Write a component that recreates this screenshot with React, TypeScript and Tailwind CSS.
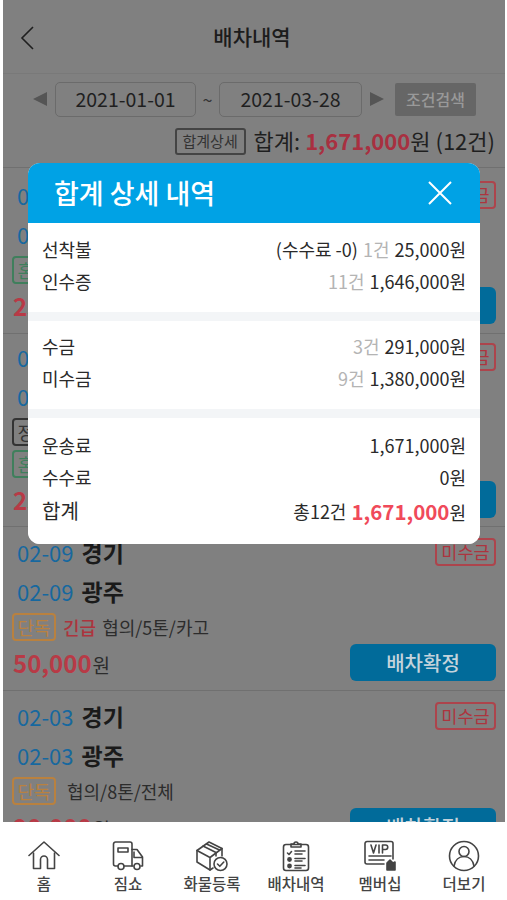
import React from 'react';

type Order = {
  date: string;
  from: string;
  to: string;
  tags: { label: string; tone: string }[];
  urgent?: boolean;
  info: string;
  price: string;
  pad: string;
};

const orders: Order[] = [
  { date: '02-26', from: '경기', to: '부산', tags: [{ label: '혼적', tone: 'border-[#3f7f5c] text-[#3f7f5c]' }], info: '협의/5톤/카고', price: '250,000', pad: 'pt-[8px] pb-[9px]' },
  { date: '02-17', from: '경기', to: '대구', tags: [{ label: '정기', tone: 'border-[#333333] text-[#333333]' }, { label: '혼적', tone: 'border-[#3f7f5c] text-[#3f7f5c]' }], info: '협의/5톤/윙바디', price: '230,000', pad: 'pt-[4px] pb-[8px]' },
  { date: '02-09', from: '경기', to: '광주', tags: [{ label: '단독', tone: 'border-[#b9813f] text-[#b9813f]' }], urgent: true, info: '협의/5톤/카고', price: '50,000', pad: 'pt-[6px] pb-[9px]' },
  { date: '02-03', from: '경기', to: '광주', tags: [{ label: '단독', tone: 'border-[#b9813f] text-[#b9813f]' }], info: '협의/8톤/전체', price: '90,000', pad: 'pt-[6px] pb-[9px]' },
];

function OrderRow({ order }: { order: Order }) {
  return (
    <div className={`shrink-0 border-b border-[#707070] pl-[9px] pr-[9px] ${order.pad}`}>
      <div className="flex h-[39px] justify-between">
        <div className="flex items-center gap-[8px] pl-[5px]">
          <span className="text-[22px] text-[#16689f]">{order.date}</span>
          <span className="text-[23px] font-bold text-[#1a1a1a]">{order.from}</span>
        </div>
        <span className="mt-[5px] flex h-[28px] w-[61px] items-center justify-center rounded-[4px] border-2 border-[#ad444c] text-[17.5px] text-[#ad343e]">미수금</span>
      </div>
      <div className="flex h-[39px] items-center gap-[8px] pl-[5px]">
        <span className="text-[22px] text-[#16689f]">{order.date}</span>
        <span className="text-[23px] font-bold text-[#1a1a1a]">{order.to}</span>
      </div>
      {order.tags.map((tag, i) => (
        <div key={tag.label} className={`flex h-[28px] items-center text-[18px] text-[#2c2c2c] ${i > 0 ? 'mt-[4px]' : 'mt-[2px]'}`}>
          <span className={`flex h-[28px] w-[44px] items-center justify-center rounded-[4px] border-2 ${tag.tone}`}>{tag.label}</span>
          {i === 0 && order.urgent && <span className="ml-[7px] font-medium text-[#ad343e]">긴급</span>}
          {i === 0 && <span className={order.urgent ? 'ml-[6px]' : 'ml-[11px]'}>{order.info}</span>}
        </div>
      ))}
      <div className="mt-[3px] flex h-[37px] items-center justify-between">
        <div className="flex items-baseline pl-[1px]">
          <span className="text-[24px] font-bold text-[#b83a46]">{order.price}</span>
          <span className="ml-[1px] text-[19px] text-[#2c2c2c]">원</span>
        </div>
        <button className="flex h-[37px] w-[146px] items-center justify-center rounded-[6px] bg-[#016b9a] text-[20px] font-medium text-[#c4d3dc]">배차확정</button>
      </div>
    </div>
  );
}

function DetailRow({ label, children, big }: { label: string; children: React.ReactNode; big?: boolean }) {
  return (
    <div className={`flex items-center justify-between text-[18px] text-[#2a2a2a] ${big ? 'h-[36px]' : 'h-[32px]'}`}>
      <span className={big ? 'text-[20px]' : ''}>{label}</span>
      <span className="flex items-center gap-[5px]">{children}</span>
    </div>
  );
}

const Count = ({ children }: { children: React.ReactNode }) => <span className="text-[#b4b4b4]">{children}</span>;

function SummaryModal() {
  return (
    <div className="absolute left-[28px] top-[163px] w-[452px] overflow-hidden rounded-[12px] bg-[#f3f5f7]">
      <div className="flex h-[60px] items-center justify-between bg-[#00a2e5] pl-[26px] pr-[28px] text-white">
        <span className="text-[27px] font-medium">합계 상세 내역</span>
        <svg width="24" height="24" viewBox="0 0 24 24" fill="none" stroke="currentColor" strokeWidth="2">
          <path d="M1 1 23 23M23 1 1 23" />
        </svg>
      </div>
      <div className="bg-white px-[14px] pt-[10px] pb-[15px]">
        <DetailRow label="선착불">
          <span>(수수료 -0)</span>
          <Count>1건</Count>
          <span>25,000원</span>
        </DetailRow>
        <DetailRow label="인수증">
          <Count>11건</Count>
          <span>1,646,000원</span>
        </DetailRow>
      </div>
      <div className="mt-[9px] bg-white px-[14px] pt-[9px] pb-[15px]">
        <DetailRow label="수금">
          <Count>3건</Count>
          <span>291,000원</span>
        </DetailRow>
        <DetailRow label="미수금">
          <Count>9건</Count>
          <span>1,380,000원</span>
        </DetailRow>
      </div>
      <div className="mt-[9px] bg-white px-[14px] pt-[11px] pb-[15px]">
        <DetailRow label="운송료">
          <span>1,671,000원</span>
        </DetailRow>
        <DetailRow label="수수료">
          <span>0원</span>
        </DetailRow>
        <DetailRow label="합계" big>
          <span>총12건</span>
          <span className="flex items-baseline">
            <span className="text-[20.5px] font-bold text-[#f04a5a]">1,671,000</span>
            <span>원</span>
          </span>
        </DetailRow>
      </div>
    </div>
  );
}

const iconProps = {
  width: 32,
  height: 32,
  viewBox: '0 0 32 32',
  fill: 'none',
  stroke: '#444444',
  strokeWidth: 1.6,
  strokeLinejoin: 'round' as const,
  strokeLinecap: 'round' as const,
};

const navItems: { label: string; icon: React.ReactNode }[] = [
  {
    label: '홈',
    icon: (
      <svg {...iconProps}>
        <path d="M1 15.500 16 2l15 13.500" />
        <path d="M5.500 13v15.500h7V19.500a3.500 3.500 0 0 1 7 0v9h7V13" />
      </svg>
    ),
  },
  {
    label: '짐쇼',
    icon: (
      <svg {...iconProps}>
        <path d="M6 26H3.500a2 2 0 0 1-2-2V4a2 2 0 0 1 2-2H18a2 2 0 0 1 2 2v22h-8" />
        <path d="M20 9.500h5l5.500 7.500v9h-1.500M20 26h1" />
        <path d="M22 12v5.500h8" />
        <path d="M6 8h10v4H6z" />
        <circle cx="9" cy="26.500" r="3" />
        <circle cx="25" cy="26.500" r="3" />
      </svg>
    ),
  },
  {
    label: '화물등록',
    icon: (
      <svg {...iconProps}>
        <path d="M1 10.500 13 2l13 6.500V16M1 10.500V22l13 8 3-2" />
        <path d="m1 10.500 13 7 12-9M14 17.500V30" />
        <path d="m7 6 13 6.500v3.500M10.500 4l13 6" />
        <circle cx="24.500" cy="24" r="6.500" />
        <path d="m21.500 24 2.300 2.300 4-4.300" />
      </svg>
    ),
  },
  {
    label: '배차내역',
    icon: (
      <svg {...iconProps}>
        <rect x="3.500" y="4.500" width="25" height="26" rx="2.500" />
        <path d="M11 7V4h3a2 2 0 0 1 4 0h3v3z" />
        <path d="m7.500 13 1.500 1.500 2.500-3M15 11h10M15 14h7M15 18.500h10M15 21h7M15 25.500h10M15 28h6" />
        <circle cx="9.500" cy="19.500" r="1.600" fill="#444444" />
        <circle cx="9.500" cy="26" r="1.600" fill="#444444" />
      </svg>
    ),
  },
  {
    label: '멤버십',
    icon: (
      <svg {...iconProps}>
        <path d="M20 24H3a2 2 0 0 1-2-2V3.500a2 2 0 0 1 2-2h24a2 2 0 0 1 2 2V19" />
        <path d="M5 20h15M5 16h22" />
        <path d="m7 5 2.500 8L12 5M15 5v8M18.500 13V5h3a2 2 0 0 1 0 4.500h-3" />
        <path d="M23 30v-7l3-3 3 3 2-1v8z" fill="#444444" />
      </svg>
    ),
  },
  {
    label: '더보기',
    icon: (
      <svg {...iconProps}>
        <circle cx="16" cy="16" r="14.500" />
        <circle cx="16" cy="11.500" r="5" />
        <path d="M6 26c1-6 5-9.500 10-9.500s9 3.500 10 9.500" />
      </svg>
    ),
  },
];

export default function App() {
  return (
    <div className="relative flex h-[900px] w-[507px] flex-col overflow-hidden bg-white font-['Noto_Sans_CJK_KR',sans-serif]">
      <div className="ml-[3px] mr-[2px] flex min-h-0 flex-1 flex-col bg-[#808080]">
        <header className="relative flex h-[74px] shrink-0 items-center justify-center border-b border-[#797979] pr-[4px]">
          <svg className="absolute left-[17px] top-[26px]" width="14" height="24" viewBox="0 0 14 24" fill="none" stroke="#1f1f1f" strokeWidth="1.6">
            <path d="M13 1 2 12l11 11" />
          </svg>
          <h1 className="text-[21px] font-medium text-[#1c1c1c]">배차내역</h1>
        </header>

        <div className="h-[94px] shrink-0 border-b border-[#707070] pt-[7px]">
          <div className="flex h-[36px] items-center pl-[30px]">
            <span className="h-0 w-0 border-y-[7px] border-r-[14px] border-y-transparent border-r-[#555555]" />
            <span className="ml-[8px] flex h-[35px] w-[141px] items-center justify-center rounded-[5px] border border-[#6b6b6b] text-[19.5px] text-[#1f1f1f]">2021-01-01</span>
            <span className="w-[23px] text-center text-[18px] text-[#333333]">~</span>
            <span className="flex h-[35px] w-[143px] items-center justify-center rounded-[5px] border border-[#6b6b6b] text-[19.5px] text-[#1f1f1f]">2021-03-28</span>
            <span className="ml-[8px] h-0 w-0 border-y-[7px] border-l-[14px] border-y-transparent border-l-[#555555]" />
            <button className="ml-[11px] flex h-[33px] w-[81px] items-center justify-center rounded-[2px] bg-[#666666] text-[16px] font-medium text-[#999999]">조건검색</button>
          </div>
          <div className="mt-[9px] flex h-[28px] items-center justify-end pr-[10px] text-[22px] text-[#1f1f1f]">
            <span className="mr-[8px] mt-[2px] flex h-[27px] w-[71px] items-center justify-center rounded-[3px] border-2 border-[#444444] text-[15px] text-[#333333]">합계상세</span>
            <span>합계:&nbsp;</span>
            <span className="font-bold text-[#a83040]">1,671,000</span>
            <span>원 (12건)</span>
          </div>
        </div>

        <div className="flex min-h-0 flex-1 flex-col overflow-hidden">
          {orders.map((order) => (
            <OrderRow key={order.date} order={order} />
          ))}
        </div>
      </div>

      <nav className="flex h-[78px] shrink-0 bg-white pl-[2px]">
        {navItems.map((item) => (
          <div key={item.label} className="flex w-[84px] flex-col items-center pt-[18px]">
            {item.icon}
            <span className="text-[15.5px] leading-[22px] font-medium text-[#444444]">{item.label}</span>
          </div>
        ))}
      </nav>

      <SummaryModal />
    </div>
  );
}
